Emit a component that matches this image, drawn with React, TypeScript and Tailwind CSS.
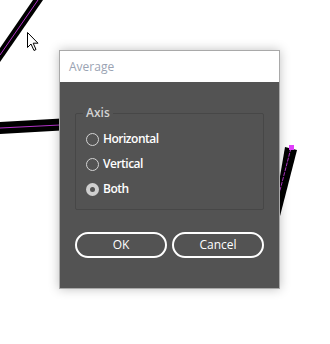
import React from "react";

const FONT = { fontFamily: '"Open Sans", "Noto Sans", "Liberation Sans", sans-serif' };

type Option = { id: string; label: string };

const options: Option[] = [
  { id: "h", label: "Horizontal" },
  { id: "v", label: "Vertical" },
  { id: "b", label: "Both" },
];

// background artwork: stroked paths with selected path highlight
function Artwork() {
  return (
    <svg className="absolute inset-0" width="330" height="344" viewBox="0 0 330 344">
      <polygon points="33,0 43,0 0,62 0,48" fill="#000" />
      <line x1="38" y1="0" x2="0" y2="55" stroke="#e040fb" strokeWidth="0.8" />
      <polygon points="0,122 70,118 70,130 0,134" fill="#000" />
      <line x1="0" y1="128" x2="70" y2="124.5" stroke="#e040fb" strokeWidth="0.8" />
      <polygon points="285,147 297,150 279,220 276,200" fill="#000" />
      <line x1="291" y1="148" x2="278" y2="198" stroke="#e040fb" strokeWidth="0.8" strokeDasharray="4 1" />
      <rect x="289" y="145" width="5" height="5" fill="#e040fb" />
      <rect x="259" y="287" width="2" height="2" fill="#333" />
      {/* mouse cursor */}
      <path
        d="M27.5 32.5 L27.5 47.5 L31 44 L34 50.5 L36 49.5 L33.2 43.2 L38 43.2 Z"
        fill="#fff"
        stroke="#000"
        strokeWidth="1"
        strokeLinejoin="miter"
      />
    </svg>
  );
}

function Radio({ checked }: { checked: boolean }) {
  return checked ? (
    <span className="w-[13px] h-[13px] rounded-full bg-[#cfcfcf] flex items-center justify-center">
      <span className="w-[5px] h-[5px] rounded-full bg-[#535353]" />
    </span>
  ) : (
    <span className="w-[13px] h-[13px] rounded-full border-[1.5px] border-[#d4d4d4]" />
  );
}

export default function App() {
  const selected = "b";

  return (
    <div className="relative w-[330px] h-[344px] bg-white overflow-hidden" style={FONT}>
      <Artwork />

      {/* Dialog */}
      <div className="absolute left-[59px] top-[50px] w-[221px] h-[239px] border border-[#a9a9a9] shadow-[0_0_10px_rgba(0,0,0,0.25)] flex flex-col">
        <div className="h-[31px] bg-white flex items-center pl-[9px] text-[12px] text-[#9aa3b3]">
          Average
        </div>

        <div className="flex-1 bg-[#535353] flex flex-col px-[15px]">
          <div className="relative mt-[31px] h-[97px] border border-[#474747] rounded-[2px] flex flex-col pl-[10px] pt-[18px] gap-[11px]">
            <span className="absolute left-[7px] -top-[9px] bg-[#535353] px-[3px] text-[12px] leading-[16px] font-semibold text-[#d2d2d2]">
              Axis
            </span>
            {options.map((o) => (
              <label key={o.id} className="flex items-center gap-[4px] h-[14px] text-[12px] font-semibold text-white">
                <Radio checked={o.id === selected} />
                <span className="tracking-[-0.5px]">{o.label}</span>
              </label>
            ))}
          </div>

          <div className="flex gap-[5px] mt-[22px]">
            <button className="w-[92px] h-[26px] rounded-full border-2 border-white text-[12px] text-white flex items-center justify-center">
              OK
            </button>
            <button className="w-[92px] h-[26px] rounded-full border-2 border-white text-[12px] text-white flex items-center justify-center">
              Cancel
            </button>
          </div>
        </div>
      </div>
    </div>
  );
}
